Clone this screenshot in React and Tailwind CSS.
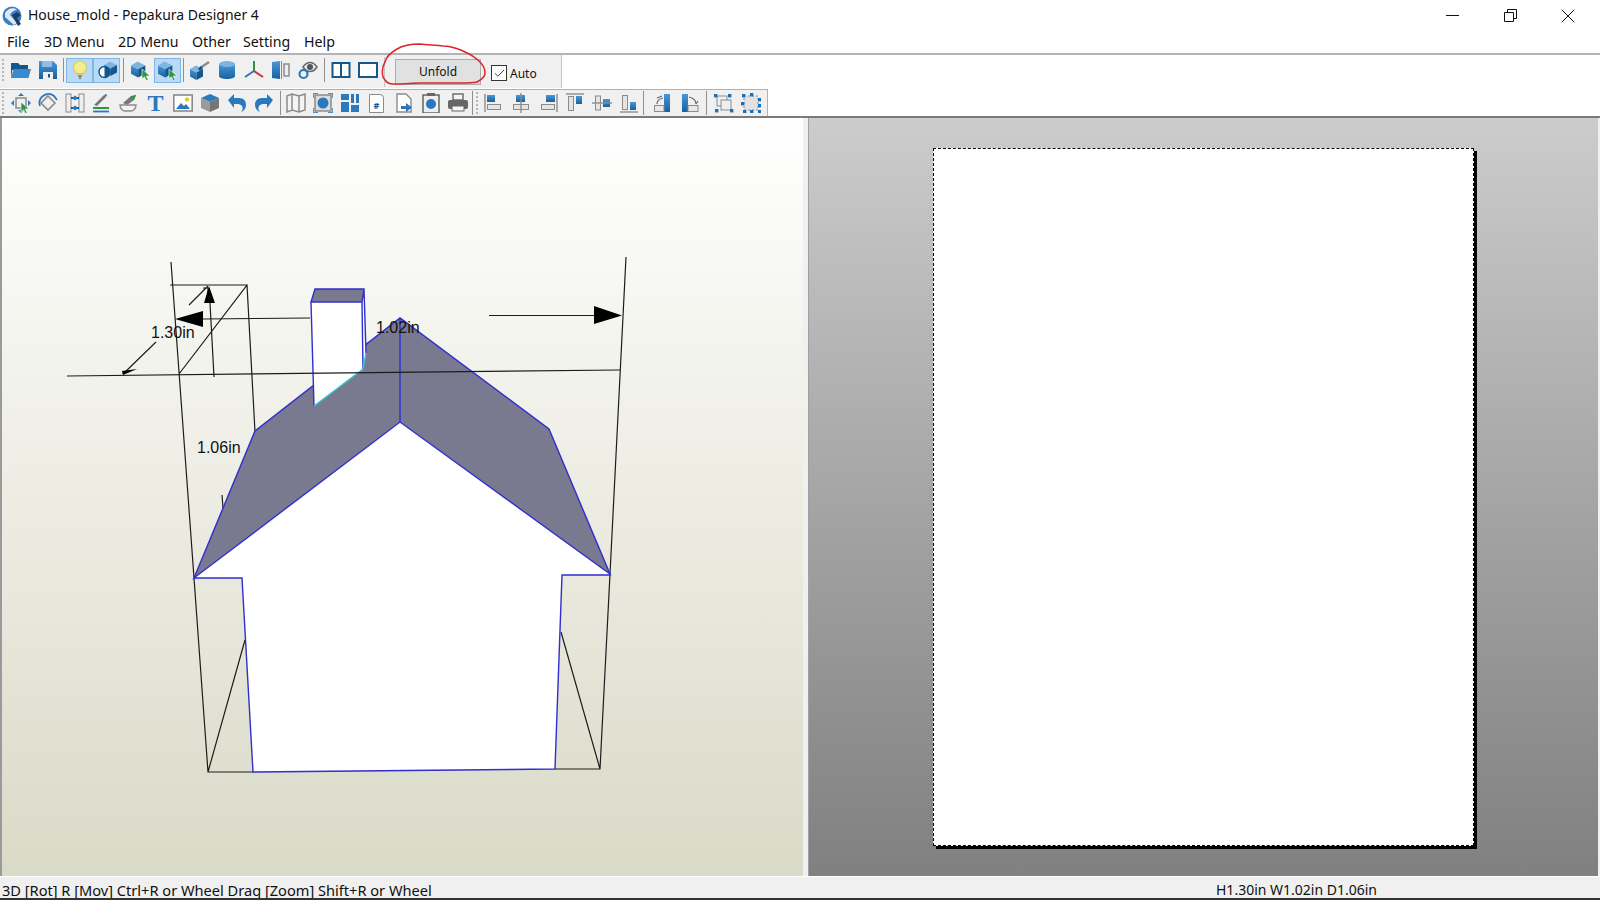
import { Minus, X, Check } from 'lucide-react';

const blue = '#2a78bd';
const fillBlue = 'url(#gb)';
const dark = '#14578f';
const light = '#7db4e0';
const gray = '#8b8b8b';

const Cube = ({ x = 0, y = 0, s = 1, top = light, left = fillBlue, right = dark }) => (
  <g transform={`translate(${x} ${y}) scale(${s})`}>
    <path d="M0 4l6-3.5L13 4 6.5 7.5z" fill={top} />
    <path d="M0 4l6.5 3.5V15L0 11.5z" fill={left} />
    <path d="M13 4L6.5 7.5V15l6.5-3.5z" fill={right} />
  </g>
);

const Cursor = ({ x = 0, y = 0 }) => (
  <path transform={`translate(${x} ${y})`} d="M0 0v10l2.4-2.2 2 3.8 1.8-.9-2-3.7H8z" fill="#2f9440" stroke="#fff" strokeWidth=".6" />
);

const Align = ({ line, box, bar }) => (
  <>
    <rect x={box[0]} y={box[1]} width={box[2]} height={box[3]} fill={fillBlue} />
    <rect x={bar[0]} y={bar[1]} width={bar[2]} height={bar[3]} fill="#e4e4e4" stroke={gray} />
    <path d={line} stroke={gray} strokeWidth="1.4" fill="none" />
  </>
);

const Corners = ({ pts }) => pts.map(([x, y]) => <rect key={`${x}-${y}`} x={x} y={y} width="3.4" height="3.4" fill="#1f6fb5" />);

const icons = {
  folder: <><path d="M0 3h7l2 2h8v5H0z" fill={dark} /><path d="M0 18l2.500-9H20l-2.500 9z" fill="#3a8ad0" /><path d="M0 3v15l1-6V3z" fill={dark} /></>,
  save: <><path d="M1 1h14l4 4v14H1z" fill={fillBlue} /><rect x="4" y="1" width="10" height="6" fill="#8fbde3" /><rect x="5" y="12" width="10" height="7" fill="#f0f0f0" /><rect x="10" y="14" width="2" height="3.500" fill={dark} /></>,
  bulb: <><circle cx="10" cy="7.500" r="6.500" fill="#f3ee8c" stroke="#d2c65a" /><path d="M7.500 13h5v2h-5z" fill="#d6c75a" /><path d="M8 15.500h4v1.500H8zM9 17.500h2v1.500H9z" fill="#777" /></>,
  shade: <><Cube x="7" y="1" s="1" /><circle cx="7.500" cy="12" r="5.500" fill="#fff" stroke={dark} strokeWidth="1.400" /><path d="M7.500 6.500a5.500 5.500 0 0 1 0 11z" fill={dark} /></>,
  pick: <><Cube x="0" y="1" s="1.100" /><Cursor x="11" y="9" /></>,
  brush: <><Cube x="0" y="5" s="1" /><path d="M10 8l9-6" stroke={gray} strokeWidth="2.500" /><path d="M9 10l3-3" stroke={dark} strokeWidth="3" /></>,
  cylinder: <><path d="M2 4v12c0 4 16 4 16 0V4z" fill={fillBlue} /><ellipse cx="10" cy="4" rx="8" ry="3" fill={light} /></>,
  axes: <><path d="M10 11V1" stroke="#2f9440" strokeWidth="2" /><path d="M10 11l-9 6" stroke={blue} strokeWidth="2" /><path d="M10 11l9 6" stroke="#c8343a" strokeWidth="2" /></>,
  mirror: <><path d="M1 2l8-1v18l-8-1z" fill={fillBlue} /><path d="M10.500 1v18" stroke={gray} /><rect x="13" y="4" width="5" height="12" fill="#eee" stroke={gray} strokeWidth="1.500" /></>,
  eye: <><path d="M5 7c4-6 10-6 14 0-4 6-10 6-14 0z" fill="#e8e8e8" stroke="#666" strokeWidth="1.500" /><circle cx="12" cy="7" r="3" fill="#555" /><circle cx="5.500" cy="14" r="4" fill="none" stroke={blue} strokeWidth="2.200" /></>,
  split: <><rect x="1.500" y="3" width="17" height="14" fill="#fff" stroke={dark} strokeWidth="2" /><path d="M10 3v14" stroke={dark} strokeWidth="2" /></>,
  single: <><rect x="1" y="3" width="18" height="14" fill="#fff" stroke={dark} strokeWidth="2" /></>,
  move: <><rect x="5" y="5" width="10" height="10" fill="none" stroke={gray} strokeWidth="1.500" /><path d="M10 0l3 3H7zM10 20l3-3H7zM0 10l3-3v6zM20 10l-3-3v6z" fill={blue} /><Cursor x="10" y="9" /></>,
  rotate: <><path d="M10 3l7 7-7 7-7-7z" fill="#efefef" stroke={gray} strokeWidth="1.600" /><path d="M2 13a9 9 0 0 1 14-10l3 4" fill="none" stroke={blue} strokeWidth="1.800" /></>,
  spread: <><rect x="1" y="1" width="5" height="18" fill="#eee" stroke={gray} /><rect x="14" y="1" width="5" height="18" fill="#eee" stroke={gray} /><path d="M6 5h8M6 15h8" stroke={dark} strokeWidth="2" /><path d="M7 5l3-2.500v5zM13 5l-3-2.500v5zM7 15l3-2.500v5zM13 15l-3-2.500v5z" fill={blue} /></>,
  pencil: <><path d="M2 12L12 2l2 2L5 13z" fill="#777" /><path d="M12 2l2-1 1 1-1 2z" fill={blue} /><path d="M1 15h16" stroke="#2f9440" strokeWidth="2" /><path d="M1 18.500h16" stroke={blue} strokeWidth="1.800" /></>,
  dish: <><path d="M4 10l8-7 5-1-2 5-7 5z" fill="#777" /><path d="M11 4l6-2-2 5z" fill="#2f9440" /><path d="M1 12h16c0 4-3 6-5 6H6c-2 0-5-2-5-6z" fill="#f2f2f2" stroke={gray} strokeWidth="1.400" /></>,
  image: <><rect x=".8" y="2" width="18.400" height="16" fill="#fff" stroke={gray} strokeWidth="1.600" /><path d="M3 16l5-6 3 3 2-2 4 5z" fill={blue} /><circle cx="14" cy="6.500" r="2.300" fill="#e6cf3c" /></>,
  box: <><path d="M1 5l9-4 9 4-9 4z" fill={blue} /><path d="M1 5l9 4v10l-9-4z" fill="#9a9a9a" /><path d="M19 5l-9 4v10l9-4z" fill="#767676" /></>,
  undo: <path d="M1 7l6-6v4h5c5 0 7 3 7 7 0 3-2 6-5 7 2-2 2-4 1-6-1-1-2-2-4-2H7v4z" fill={blue} />,
  redo: <path d="M19 7l-6-6v4H8c-5 0-7 3-7 7 0 3 2 6 5 7-2-2-2-4-1-6 1-1 2-2 4-2h4v4z" fill={blue} />,
  map: <path d="M1 3l5-2 7 2 6-2v16l-6 2-7-2-5 2zM6 1v16M13 3v16" fill="#f4f4f4" stroke={gray} strokeWidth="1.500" />,
  frame: <><rect x="2" y="2" width="16" height="16" fill="#dcdcdc" stroke={gray} strokeWidth="1.500" /><circle cx="10" cy="10" r="5.500" fill={blue} /><path d="M0 5V0h5M15 0h5v5M20 15v5h-5M5 20H0v-5" fill="none" stroke="#5a90bd" strokeWidth="1.800" /></>,
  layout: <path d="M1 1h8v6H1zM11 1h3v9h-3zM16 1h3v9h-3zM1 9h8v10H1zM11 12h8v7h-8z" fill={blue} />,
  clip: <><rect x="2" y="2" width="16" height="18" fill="#eee" stroke="#666" strokeWidth="1.500" /><rect x="6" y="0" width="8" height="3" fill="#666" /><circle cx="10" cy="11" r="5" fill={blue} /></>,
  print: <><rect x="5" y="1" width="10" height="6" fill="#f4f4f4" stroke="#666" strokeWidth="1.400" /><rect x="0" y="7" width="20" height="9" rx="2" fill="#666" /><rect x="4" y="13" width="12" height="5" fill="#f4f4f4" stroke="#666" /></>,
  fileOut: <><path d="M3 1h9l5 5v13H3z" fill="#fff" stroke={gray} strokeWidth="1.400" /><path d="M7 13h5v-3l6 4.500-6 4.500v-3H7z" fill={blue} /></>,
  alignL: <Align line="M1 1v18" box={[3, 2, 8, 7]} bar={[3.500, 11.500, 13, 5]} />,
  alignC: <Align line="M10 0v20" box={[5, 2, 9, 7]} bar={[2.500, 11.500, 15, 5]} />,
  alignR: <Align line="M19 1v18" box={[8, 2, 9, 7]} bar={[3.500, 11.500, 13, 5]} />,
  alignT: <Align line="M1 1h18" box={[11, 3, 6, 8]} bar={[3.500, 3.500, 5, 14]} />,
  alignM: <Align line="M0 10h20" box={[11, 6, 7, 8]} bar={[3.500, 3, 5, 14]} />,
  alignB: <Align line="M1 19h18" box={[11, 9, 6, 8]} bar={[3.500, 2.500, 5, 14]} />,
  turnL: <><path d="M11 1h6v18h-6z" fill={fillBlue} /><rect x="1.500" y="12.500" width="9.500" height="6" fill="#e8e8e8" stroke={gray} /><path d="M4 11c0-3 2-5 6-6M4 5l5-2" fill="none" stroke="#666" strokeWidth="1.200" /></>,
  turnR: <><path d="M2 1h6v18H2z" fill={fillBlue} /><rect x="8" y="12.500" width="10" height="6" fill="#e8e8e8" stroke={gray} /><path d="M9 4c4 1 7 3 7 7M16 11l2-3" fill="none" stroke="#666" strokeWidth="1.200" /></>,
  group: <><rect x="3" y="3" width="10" height="10" fill="none" stroke={gray} /><rect x="7" y="7" width="10" height="10" fill="#eee" stroke={gray} /><Corners pts={[[0, 1], [14, 1], [1, 16], [16, 16]]} /></>,
  ungroup: <><rect x="3" y="3" width="14" height="14" fill="#e2e2e2" stroke={gray} strokeDasharray="2 2" /><Corners pts={[[1, 1], [9, 0], [0, 9], [17, 5], [2, 17], [9, 17], [17, 11], [17, 17]]} /></>,
};

function Icon({ name, active, size = 20 }) {
  return (
    <div className={`w-[27px] h-[25px] flex items-center justify-center shrink-0 ${active ? 'bg-[#b9d9f4] border border-[#7fb7e4]' : ''}`}>
      <svg width={size} height={size} viewBox="0 0 20 20">{icons[name]}</svg>
    </div>
  );
}

function Sep({ className }) {
  return <div className={`w-px h-[24px] bg-[#8f8f8f] shrink-0 ${className}`}></div>;
}

function Grip({ className = '' }) {
  return (
    <div className={`flex flex-col gap-[2px] shrink-0 ${className}`}>
      {[0, 1, 2, 3, 4, 5].map(i => <div key={i} className="w-[2px] h-[2px] bg-[#b5b5b5]"></div>)}
    </div>
  );
}

function PageIcon() {
  return (
    <div className="w-[27px] h-[25px] flex items-center justify-center shrink-0">
      <div className="w-[15px] h-[19px] bg-white border border-[#8b8b8b] rounded-tr-[4px] flex items-end justify-center text-[9px] leading-[12px] font-bold text-[#14578f]">#</div>
    </div>
  );
}

function TextIcon() {
  return (
    <div className="w-[27px] h-[25px] flex items-center justify-center shrink-0 font-['Liberation_Serif',serif] font-bold text-[24px] leading-none text-[#2a78bd]">T</div>
  );
}

function House() {
  const line = { stroke: '#1c1c1c', strokeWidth: 1.2, fill: 'none' };
  const edge = { stroke: '#2f2fd0', strokeWidth: 1.4, fill: 'none' };
  return (
    <svg className="block w-full h-full" viewBox="2 118 801 758">
      <path d="M171 262L194 578L208 772L253 772M247 285L255 432M170 285H247L179 374M626 257L610 574L600 769L555 769M245 640L208 772M561 632L600 769M222 495L223 508" {...line} />
      <path d="M189 305L208 286M203 288h5v5M210 303L214 377M203 319L310 318M156 342L123 374M489 315.500H597" {...line} />
      <path d="M209 286L204 303H215zM175 319L203 311V327zM122 371L137 369L123 375zM622 315.500L594 306V324z" fill="#000" />

      <path d="M194 578L255 431L400 318L549 429L610 574L400 422z" fill="#79798f" />
      <path d="M194 578L400 422L610 574L562 575L555 769L253 772L242 578z" fill="#fff" />
      <path d="M194 578L255 431L400 318L549 429L610 574L400 422zM400 318V422M194 578H242L253 772L555 769L562 575H610" {...edge} />

      <path d="M311 302H362L363 369L314 406z" fill="#fff" />
      <path d="M362 302L364 289L366 353L363 369z" fill="#fff" />
      <path d="M311 302L315 289H364L362 302z" fill="#79798f" />
      <path d="M311 302L315 289H364L362 302zM311 302L314 406M362 302L363 369M364 289L366 353" {...edge} />
      <path d="M314 406L363 369L366 353" stroke="#35c8d0" strokeWidth="1.400" fill="none" />

      <path d="M67 376L620 370" {...line} />

      <g className="font-['Liberation_Sans',sans-serif] text-[16px]" fill="#111">
        <text x="151" y="338">1.30in</text>
        <text x="376" y="333">1.02in</text>
        <text x="197" y="453">1.06in</text>
      </g>
    </svg>
  );
}

export default function App() {
  return (
    <div className="w-[1600px] h-[900px] overflow-hidden flex flex-col bg-white text-[#111] font-['Noto_Sans',sans-serif] relative">
      <svg className="absolute w-0 h-0">
        <defs>
          <linearGradient id="gb" x1="0" y1="0" x2="0" y2="1">
            <stop offset="0" stopColor="#4a98d8" />
            <stop offset="1" stopColor="#17609e" />
          </linearGradient>
        </defs>
      </svg>

      <div className="h-[31px] flex items-center shrink-0">
        <svg className="ml-[2px]" width="21" height="20" viewBox="0 0 21 20">
          <circle cx="10" cy="10" r="9.500" fill="#3b7fc0" />
          <path d="M3 7c3-5 9-6 12-3-3 0-6 2-7 5l7 8-3 2-9-8z" fill="#dfe9f4" />
          <path d="M10 9l5-3 4 3-4 3 4 6-3 2z" fill="#1d3f66" />
        </svg>
        <span className="ml-[5px] pb-[2px] text-[14px]">House_mold - Pepakura Designer 4</span>
        <div className="ml-auto pr-[3px] flex items-center">
          <div className="w-[58px] flex justify-center"><Minus size={21} strokeWidth={1.200} /></div>
          <div className="w-[58px] flex justify-center">
            <svg width="13" height="13" viewBox="0 0 13 13" fill="none" stroke="#111"><path d="M.5 3.500h9v9h-9zM3.500 3.500v-3h9v9h-3" /></svg>
          </div>
          <div className="w-[58px] flex justify-center"><X size={24} strokeWidth={1} /></div>
        </div>
      </div>

      <div className="h-[22px] flex items-center pl-[7px] text-[14.200px] shrink-0">
        <span className="w-[37px]">File</span>
        <span className="w-[74px]">3D Menu</span>
        <span className="w-[74px]">2D Menu</span>
        <span className="w-[51px]">Other</span>
        <span className="w-[61px]">Setting</span>
        <span>Help</span>
      </div>

      <div className="h-[36px] border-t-2 border-[#b4b4b4] flex shrink-0">
        <div className="h-[33px] w-[562px] flex items-center bg-[#f0f0f0] border-r border-[#c4c4c4]">
          <div className="flex items-center pb-[3px]">
            <Grip className="ml-[2px] mr-[3px]" />
            <Icon name="folder" />
            <Icon name="save" />
            <Sep className="mx-[2px]" />
            <Icon name="bulb" active />
            <Icon name="shade" active />
            <Sep className="mx-[3px]" />
            <Icon name="pick" />
            <Icon name="pick" active />
            <Sep className="mx-[2px]" />
            <Icon name="brush" />
            <Icon name="cylinder" />
            <Icon name="axes" />
            <Icon name="mirror" />
            <Icon name="eye" />
            <Sep className="ml-[3px] mr-[2px]" />
            <Icon name="split" />
            <Icon name="single" />
          </div>
          <div className="w-px h-[30px] bg-[#c4c4c4] ml-[3px]"></div>
          <button className="ml-[10px] w-[86px] h-[26px] bg-[#e1e1e1] border border-[#adadad] text-[12px] flex items-center justify-center">Unfold</button>
          <div className="ml-[10px] w-[16px] h-[16px] bg-white border border-[#333] flex items-center justify-center mt-[3px]"><Check size={13} strokeWidth={1.500} /></div>
          <span className="ml-[3px] text-[12px] mt-[4px]">Auto</span>
        </div>
      </div>

      <div className="h-[27px] flex shrink-0">
        <div className="w-[768px] h-[27px] flex items-center bg-[#f0f0f0] border-t border-r border-[#b0b0b0]">
          <Grip className="ml-[2px] mr-[3px]" />
          <Icon name="move" />
          <Icon name="rotate" />
          <Icon name="spread" />
          <Icon name="pencil" />
          <Icon name="dish" />
          <TextIcon />
          <Icon name="image" />
          <Icon name="box" />
          <Icon name="undo" />
          <Icon name="redo" />
          <Sep className="ml-[3px] mr-[1px]" />
          <Icon name="map" />
          <Icon name="frame" />
          <Icon name="layout" />
          <PageIcon />
          <Icon name="fileOut" />
          <Icon name="clip" />
          <Icon name="print" />
          <Sep className="ml-[1px]" />
          <Grip className="ml-[3px] mr-[2px]" />
          <Icon name="alignL" />
          <Icon name="alignC" />
          <Icon name="alignR" />
          <Icon name="alignT" />
          <Icon name="alignM" />
          <Icon name="alignB" />
          <Sep className="ml-[1px] mr-[5px]" />
          <Icon name="turnL" />
          <Icon name="turnR" />
          <Sep className="mx-[3px]" />
          <Icon name="group" />
          <Icon name="ungroup" />
        </div>
      </div>

      <div className="h-[760px] flex shrink-0 border-t-2 border-[#7a7a7a] bg-[#f0f0f0]">
        <div className="w-[803px] border-l-2 border-[#9a9a9a] bg-linear-to-b from-white to-[#dadac8]">
          <House />
        </div>
        <div className="w-[5px]"></div>
        <div className="w-[790px] pt-[30px] pl-[124px] border-l border-[#a0a0a0] bg-linear-to-b from-[#cccccc] to-[#808080]">
          <div className="w-[541px] h-[698px] bg-white border border-dashed border-black shadow-[3px_3px_0_#000]"></div>
        </div>
      </div>

      <div className="h-[22px] flex shrink-0 bg-[#f0f0f0] border-t border-white">
        <span className="pl-[2px] pt-[3px] w-[1216px] text-[14.600px] leading-[20px]">3D [Rot] R [Mov] Ctrl+R or Wheel Drag [Zoom] Shift+R or Wheel</span>
        <span className="pt-[3px] text-[14px] leading-[20px]">H1.30in W1.02in D1.06in</span>
      </div>
      <div className="h-[2px] bg-[#333] shrink-0 relative"></div>

      <svg className="absolute left-[375px] top-[40px]" width="120" height="50" viewBox="375 40 120 50" fill="none">
        <path d="M420 44C410 44 402 46 397 49C390 53 386 58 385 62C382 67 381 76 385 80C387 83 390 84 393 84C405 84 412 83 420 83C440 83 450 83 460 83C468 83 473 83 477 82C481 80 485 77 485 73C485 68 483 65 480 62C475 57 470 54 463 51C456 48 450 46 443 46C436 45 428 45 420 44Z" stroke="#d8262c" strokeWidth="1.500" />
      </svg>
    </div>
  );
}
